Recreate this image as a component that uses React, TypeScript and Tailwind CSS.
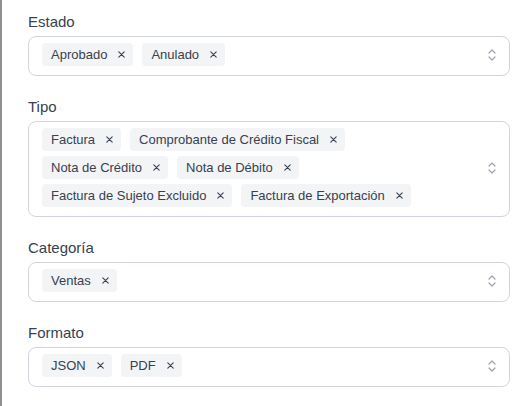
const groups: { label: string; items: string[] }[] = [
  { label: 'Estado', items: ['Aprobado', 'Anulado'] },
  {
    label: 'Tipo',
    items: [
      'Factura',
      'Comprobante de Crédito Fiscal',
      'Nota de Crédito',
      'Nota de Débito',
      'Factura de Sujeto Excluido',
      'Factura de Exportación',
    ],
  },
  { label: 'Categoría', items: ['Ventas'] },
  { label: 'Formato', items: ['JSON', 'PDF'] },
];

function Chip({ text }: { text: string }) {
  return (
    <span className="flex items-center h-[23px] rounded bg-[#f3f4f6] pl-[9px] pr-[8px] text-[13px] leading-none text-[#374151]">
      {text}
      <svg className="ml-[11px] h-[7px] w-[7px] text-[#374151]" viewBox="0 0 7 7" fill="none" stroke="currentColor" strokeWidth={1.1} strokeLinecap="round">
        <path d="M0.8 0.8 L6.2 6.2 M6.2 0.8 L0.8 6.2" />
      </svg>
    </span>
  );
}

function MultiSelect({ items }: { items: string[] }) {
  return (
    <div className="flex items-center min-h-10 w-full rounded-lg border border-[#d1d5db] bg-white pl-[13px] pr-[12px] pt-[6px] pb-[9px]">
      <div className="flex flex-1 flex-wrap gap-x-[9px] gap-y-[5px] mr-[18px]">
        {items.map((t) => (
          <Chip key={t} text={t} />
        ))}
      </div>
      <svg className="h-[14px] w-[10px] text-[#9ca3af] shrink-0" viewBox="0 0 10 14" fill="none" stroke="currentColor" strokeWidth={1.2} strokeLinecap="round" strokeLinejoin="round">
        <path d="M2 5 L5 2 L8 5" />
        <path d="M2 9 L5 12 L8 9" />
      </svg>
    </div>
  );
}

export default function App() {
  return (
    <div
      className="min-h-[406px] w-[526px] bg-white border-l-2 border-[#8f8f8f] pl-[26px] pr-[16px] pt-[13px] flex flex-col gap-[22px]"
      style={{ fontFamily: '"Liberation Sans", Arial, sans-serif' }}
    >
      {groups.map((g) => (
        <div key={g.label}>
          <div className="text-[15px] leading-[18px] mb-[5px] text-[#374151]">{g.label}</div>
          <MultiSelect items={g.items} />
        </div>
      ))}
    </div>
  );
}
